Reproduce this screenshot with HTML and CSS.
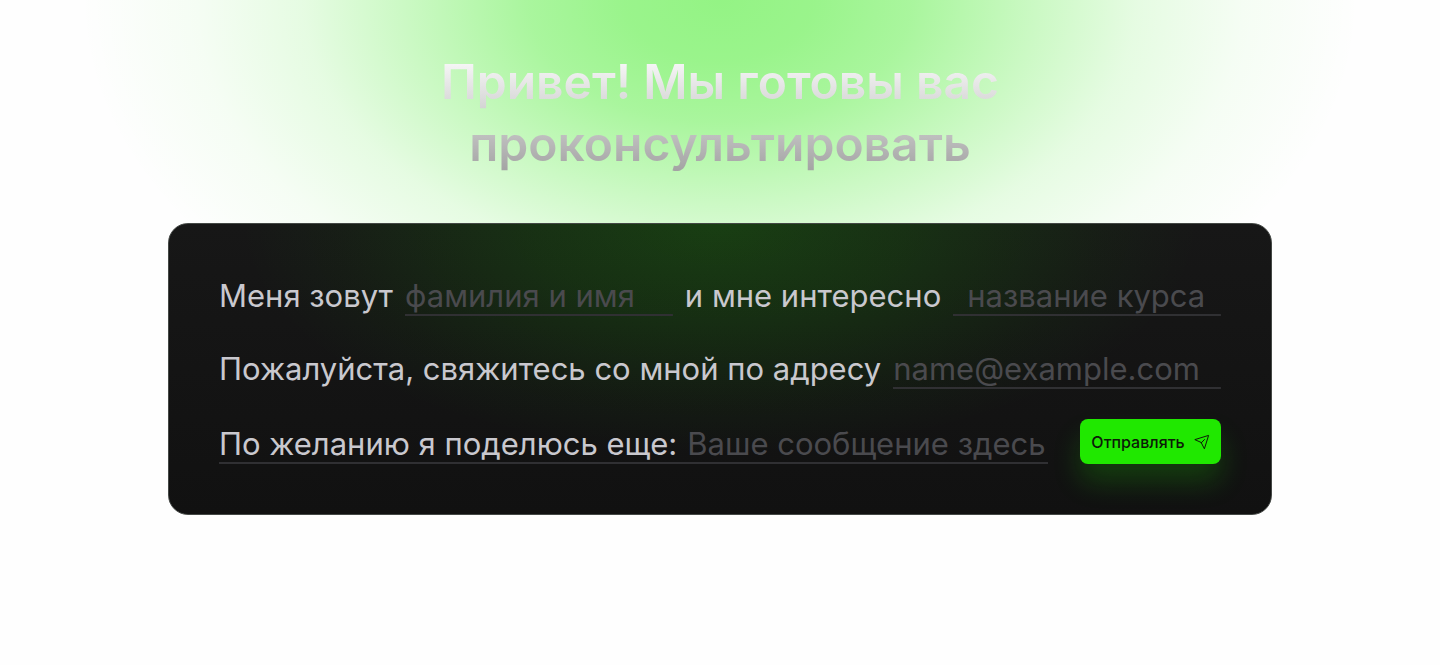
FILE: index.html
```html
<!DOCTYPE html>
<html lang="ru">
<head>
<meta charset="utf-8">
<meta name="viewport" content="width=device-width, initial-scale=1">
<title>Консультация</title>
<link rel="stylesheet" href="styles.css">
</head>
<body>
<main class="contact">
  <h1 class="title">Привет! Мы готовы вас проконсультировать</h1>
  <form class="card">
    <div class="row">
      <label for="name">Меня зовут</label>
      <input class="field line" id="name" type="text" placeholder="фамилия и имя">
      <label for="course">и мне интересно</label>
      <input class="field line course" id="course" type="text" placeholder="название курса">
    </div>
    <div class="row">
      <label for="email">Пожалуйста, свяжитесь со мной по адресу</label>
      <input class="field line" id="email" type="email" placeholder="name@example.com">
    </div>
    <div class="row last">
      <div class="message line">
        <label for="message">По желанию я поделюсь еще:</label>
        <input class="field" id="message" type="text" placeholder="Ваше сообщение здесь">
      </div>
      <button class="send" type="submit">Отправлять
        <svg class="icon" viewBox="0 0 16 16" aria-hidden="true"><path d="M1.2 5.5 14.6 1.4 10.4 14.8 7.3 8.8ZM7.3 8.8 10.5 5.5"/></svg>
      </button>
    </div>
  </form>
</main>
</body>
</html>
```
FILE: styles.css
```css
* {
  box-sizing: border-box;
}

body {
  margin: 0;
  min-height: 100vh;
  font-family: Inter, "Noto Sans", sans-serif;
  background:
    radial-gradient(ellipse 640px 410px at 50% 0, rgba(32, 232, 0, 0.48) 0%, rgba(32, 232, 0, 0.45) 15%, rgba(32, 232, 0, 0.38) 30%, rgba(32, 232, 0, 0.24) 48%, rgba(32, 232, 0, 0.11) 65%, rgba(32, 232, 0, 0.04) 82%, rgba(32, 232, 0, 0) 100%),
    #fefefe;
}

.contact {
  display: flex;
  flex-direction: column;
  align-items: center;
  gap: 48px;
  padding: 51px 24px;
}

.title {
  max-width: 640px;
  margin: 0;
  font-size: 48px;
  font-weight: 600;
  line-height: 62px;
  text-align: center;
  color: transparent;
  background: linear-gradient(#ffffff 0%, #d8d8d8 42%, #a0a0a0 100%);
  -webkit-background-clip: text;
  background-clip: text;
}

.card {
  display: flex;
  flex-direction: column;
  gap: 25px;
  width: 100%;
  max-width: 1104px;
  padding: 44px 50px 50px;
  border: 1px solid #444845;
  border-radius: 20px;
  background:
    radial-gradient(ellipse 480px 230px at 50% 0, rgba(32, 232, 0, 0.19) 0%, rgba(32, 232, 0, 0.12) 40%, rgba(32, 232, 0, 0.03) 80%, rgba(32, 232, 0, 0) 100%),
    linear-gradient(#171717, #111111);
}

.row {
  display: flex;
  align-items: flex-end;
  gap: 12px;
  font-size: 31px;
  line-height: 40px;
  color: #c9c8ce;
}

.row label {
  white-space: nowrap;
}

.field {
  flex: 1 1 0;
  min-width: 0;
  height: 48px;
  padding: 7px 0 0;
  border: 0;
  outline: 0;
  font: inherit;
  color: inherit;
  background: transparent;
}

.field::placeholder {
  color: #4a4a4e;
  opacity: 1;
}

.line {
  background: linear-gradient(#303033, #303033) bottom / 100% 2px no-repeat;
}

.course {
  text-indent: 14px;
}

.last {
  gap: 32px;
  padding-top: 2px;
}

.message {
  display: flex;
  flex: 1;
  align-items: flex-end;
  gap: 10px;
  min-width: 0;
}

.send {
  display: flex;
  align-items: center;
  justify-content: center;
  gap: 9px;
  width: 141px;
  height: 45px;
  padding: 0;
  border: 0;
  border-radius: 8px;
  font: 500 16px/20px Inter, "Noto Sans", sans-serif;
  color: #0c1a08;
  background: #20e800;
  box-shadow: 0 18px 28px rgba(32, 232, 0, 0.2);
}

.icon {
  width: 16px;
  height: 16px;
  fill: none;
  stroke: currentColor;
  stroke-linejoin: round;
  stroke-linecap: round;
}
```
